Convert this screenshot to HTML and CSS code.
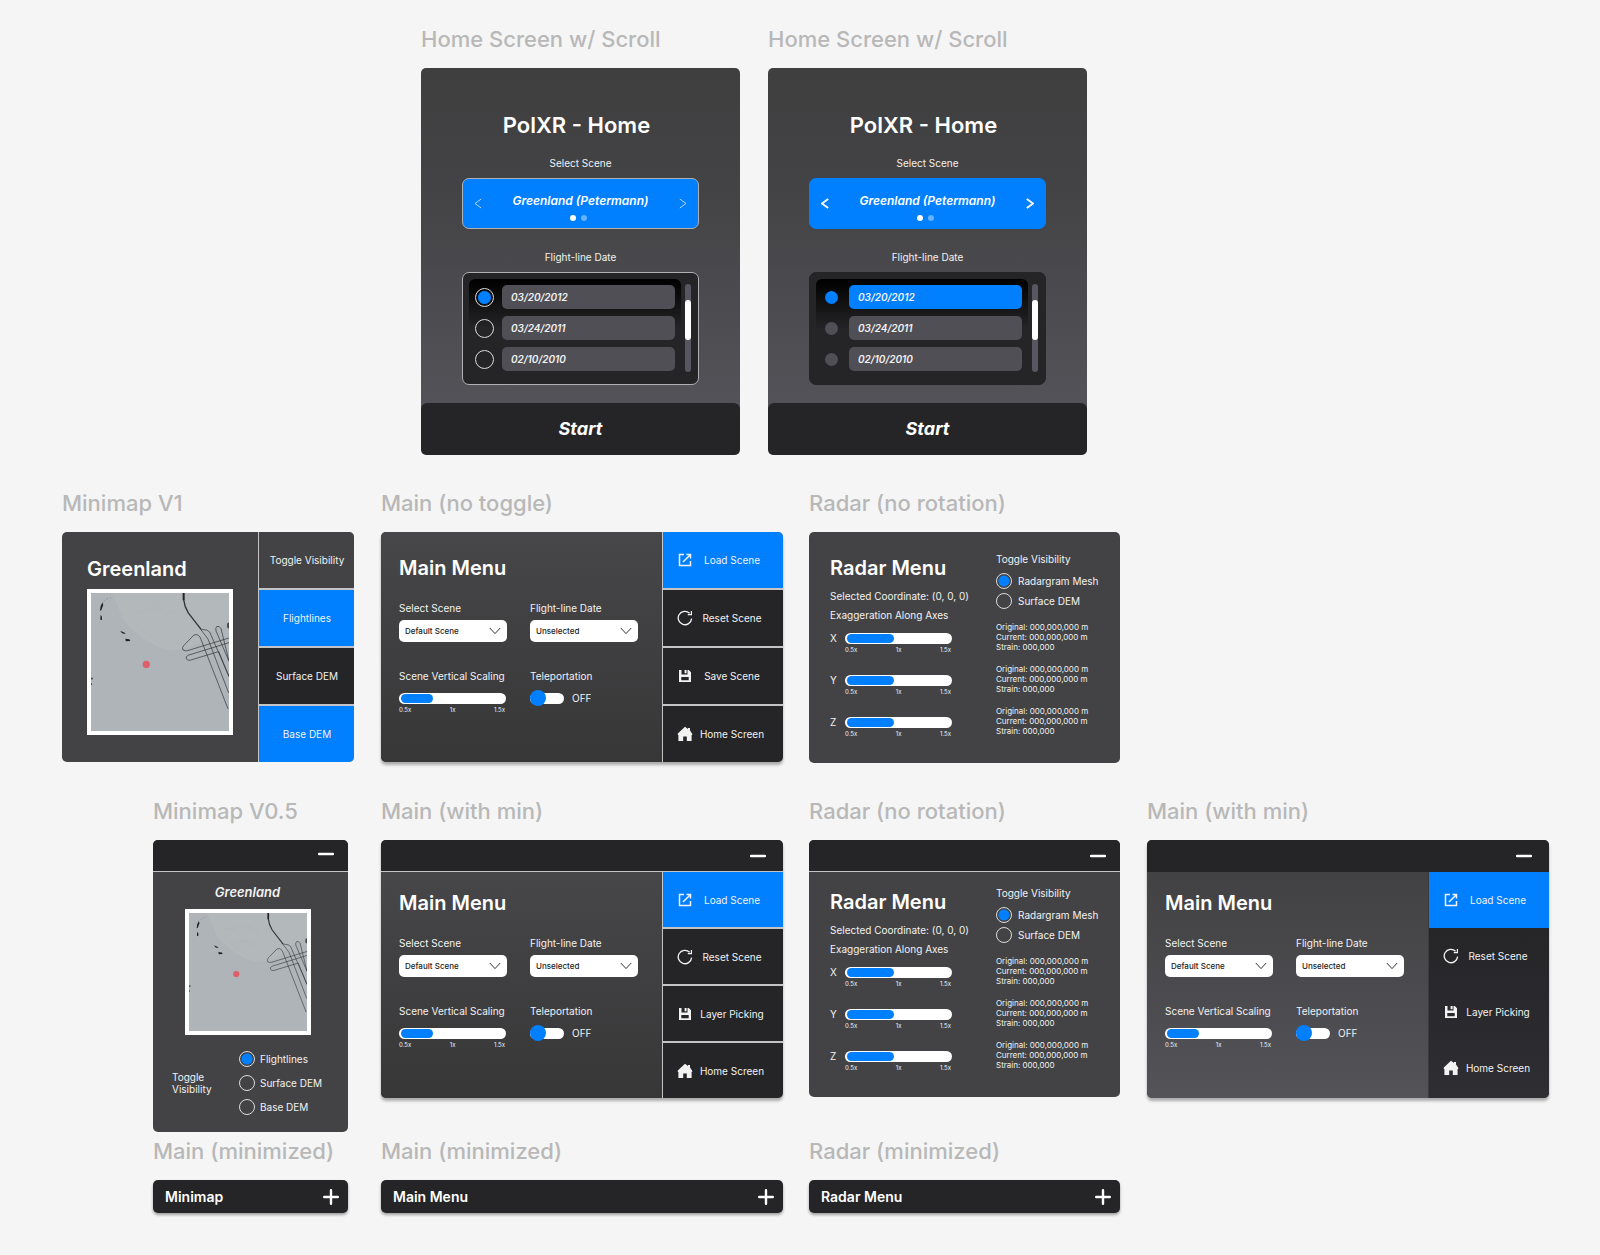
FILE: index.html
```html
<!DOCTYPE html>
<html lang="en">
<head>
<meta charset="utf-8">
<title>PolXR menus</title>
<link rel="stylesheet" href="styles.css">
</head>
<body>
<svg class="defs" aria-hidden="true">
  <symbol id="i-open" viewBox="0 0 16 16"><path d="M7 2.5H2.5v11h11V9" fill="none" stroke="currentColor" stroke-width="1.5"/><path d="M9.5 2.5h4v4M13.3 2.7 6 10" fill="none" stroke="currentColor" stroke-width="1.5"/></symbol>
  <symbol id="i-reset" viewBox="0 0 16 16"><path d="M14.6 8.6A6.7 6.7 0 1 1 12.6 3.2" fill="none" stroke="currentColor" stroke-width="1.3"/><path d="M14.4 1v3.6h-3.6" fill="none" stroke="currentColor" stroke-width="1.2"/></symbol>
  <symbol id="i-save" viewBox="0 0 16 16"><path fill="currentColor" fill-rule="evenodd" d="M2 2h2.5v4.5h6V2h1.2L14 4.3V14H2zM4.3 9v3.2h7.4V9z"/><path fill="currentColor" d="M7.6 2h2v3.2h-2z"/></symbol>
  <symbol id="i-home" viewBox="0 0 16 16"><path fill="currentColor" d="M8 .8 11 3V2h2v2.6l2.2 3.1V9H14.6v6H9.8v-4.6H6.2V15H1.4V9H.8V7.4z"/></symbol>
  <symbol id="i-down" viewBox="0 0 12 8"><path d="m.8 1 5.2 5.6L11.2 1" fill="none" stroke="#333" stroke-width="1"/></symbol>
  <symbol id="i-left" viewBox="0 0 8 11"><path d="M7.2 1 1 5.5 7.2 10" fill="none" stroke="currentColor"/></symbol>
  <symbol id="i-right" viewBox="0 0 8 11"><path d="M.8 1 7 5.5.8 10" fill="none" stroke="currentColor"/></symbol>
  <symbol id="i-min" viewBox="0 0 16 16"><path d="M1 8h14" stroke="currentColor" stroke-width="2.4" stroke-linecap="round"/></symbol>
  <symbol id="i-plus" viewBox="0 0 16 16"><path d="M1.2 8h13.6M8 1.2v13.6" stroke="currentColor" stroke-width="2.4" stroke-linecap="round"/></symbol>
  <symbol id="map" viewBox="20 20 417 417">
    <path fill="#aeb4b8" d="M20 20h417v417H20z"/>
    <path fill="#b3b8bb" d="M85 20h352v90q-60 20-90 60-70 40-130 10-60-30-100-80z"/>
    <g fill="none" stroke="#afb4b7" stroke-width="2"><path d="M130 60q30 30 60 10t70 30M180 130q40-30 90 20M210 40q20 40 60 40M150 100q30 50 80 70"/></g>
    <path fill="#222" d="m49 60 6-12 2 8-6 16-4 2zM49 86l4 6v10l-5-2zM108 134l14 6 2 4-10-2zM124 158l12 2 3 5-14 1zM21 275l5 2-3 5-2-1zM20 293l3 1-1 4h-2zM297 20h6v22h-6z"/>
    <path fill="none" stroke="#555" stroke-dasharray="5 6" d="M58 46q10-12 22-11"/>
    <path fill="none" stroke="#333" stroke-width="4" d="M300 40q2 20 14 40l38 49"/>
    <g fill="none" stroke="#2d2f31" stroke-width="2">
      <path d="M352 129q10 3 18 3 11 4 13 16l54 124M350 128q20 26 24 32l62 162"/>
      <path d="M434 370 349 152q-8-10-18-5l-30 31q-8 8-3 14 6 4 14 2l125-38"/>
      <path d="M437 170 314 208q-9 4-6 11 4 6 12 4l86-26M406 197l31 76M437 226l-24-98q-6-10-13-7-5 5-2 14l39 91"/>
    </g>
    <ellipse cx="435" cy="118" rx="4" ry="9" fill="#44484b"/>
    <circle cx="187" cy="236" r="11" fill="#dd5f6b"/>
  </symbol>
</svg>

<main class="board">
  <section class="row row-home">
    <article class="frame home">
      <h2 class="frame-label">Home Screen w/ Scroll</h2>
      <form class="panel home-panel outlined">
        <h1 class="home-title">PolXR - Home</h1>
        <p class="caption">Select Scene</p>
        <div class="scene-picker">
          <button type="button" class="arrow" aria-label="Previous scene"><svg><use href="#i-left"/></svg></button>
          <div class="scene"><strong>Greenland (Petermann)</strong><span class="dots"><i class="on"></i><i></i></span></div>
          <button type="button" class="arrow" aria-label="Next scene"><svg><use href="#i-right"/></svg></button>
        </div>
        <p class="caption date-caption">Flight-line Date</p>
        <div class="date-box">
          <div class="date-list">
            <label><input type="radio" name="d1" checked><span>03/20/2012</span></label>
            <label><input type="radio" name="d1"><span>03/24/2011</span></label>
            <label><input type="radio" name="d1"><span>02/10/2010</span></label>
          </div>
          <div class="scrollbar"><i></i></div>
        </div>
        <button type="button" class="start">Start</button>
      </form>
    </article>
    <article class="frame home">
      <h2 class="frame-label">Home Screen w/ Scroll</h2>
      <form class="panel home-panel filled">
        <h1 class="home-title">PolXR - Home</h1>
        <p class="caption">Select Scene</p>
        <div class="scene-picker">
          <button type="button" class="arrow" aria-label="Previous scene"><svg><use href="#i-left"/></svg></button>
          <div class="scene"><strong>Greenland (Petermann)</strong><span class="dots"><i class="on"></i><i></i></span></div>
          <button type="button" class="arrow" aria-label="Next scene"><svg><use href="#i-right"/></svg></button>
        </div>
        <p class="caption date-caption">Flight-line Date</p>
        <div class="date-box">
          <div class="date-list">
            <label><input type="radio" name="d2" checked><span>03/20/2012</span></label>
            <label><input type="radio" name="d2"><span>03/24/2011</span></label>
            <label><input type="radio" name="d2"><span>02/10/2010</span></label>
          </div>
          <div class="scrollbar"><i></i></div>
        </div>
        <button type="button" class="start">Start</button>
      </form>
    </article>
  </section>

  <section class="row row-v1">
    <article class="frame map-v1">
      <h2 class="frame-label">Minimap V1</h2>
      <div class="panel split flat">
        <div class="map-side">
          <h3 class="title">Greenland</h3>
          <svg class="map"><use href="#map"/></svg>
        </div>
        <div class="cells">
          <p class="cell plain">Toggle Visibility</p>
          <button class="cell active" aria-pressed="true">Flightlines</button>
          <button class="cell" aria-pressed="false">Surface DEM</button>
          <button class="cell active" aria-pressed="true">Base DEM</button>
        </div>
      </div>
    </article>
    <article class="frame main">
      <h2 class="frame-label">Main (no toggle)</h2>
      <div class="panel split raised">
        <form class="menu">
          <h3 class="title">Main Menu</h3>
          <div class="fields">
            <label class="field">Select Scene<span class="select"><select><option>Default Scene</option></select><svg><use href="#i-down"/></svg></span></label>
            <label class="field">Flight-line Date<span class="select"><select><option>Unselected</option></select><svg><use href="#i-down"/></svg></span></label>
            <label class="field">Scene Vertical Scaling
              <span class="slider"><span class="fill" style="width:31%"></span><input type="range" min="0.5" max="1.5" step="0.1" value="0.8"></span>
              <span class="ticks"><span>0.5x</span><span>1x</span><span>1.5x</span></span></label>
            <label class="field">Teleportation<span class="switch"><input type="checkbox">OFF</span></label>
          </div>
        </form>
        <nav class="cells">
          <button class="cell icon-cell active"><svg><use href="#i-open"/></svg><span>Load Scene</span></button>
          <button class="cell icon-cell"><svg><use href="#i-reset"/></svg><span>Reset Scene</span></button>
          <button class="cell icon-cell"><svg><use href="#i-save"/></svg><span>Save Scene</span></button>
          <button class="cell icon-cell"><svg><use href="#i-home"/></svg><span>Home Screen</span></button>
        </nav>
      </div>
    </article>
    <article class="frame radar">
      <h2 class="frame-label">Radar (no rotation)</h2>
      <form class="panel radar-body flat">
        <div class="radar-head">
          <h3 class="title">Radar Menu</h3>
          <p>Selected Coordinate: (0, 0, 0)</p>
          <p>Exaggeration Along Axes</p>
        </div>
        <fieldset class="radar-toggle">
          <legend>Toggle Visibility</legend>
          <label class="option"><input type="radio" name="r1" checked>Radargram Mesh</label>
          <label class="option"><input type="radio" name="r1">Surface DEM</label>
        </fieldset>
        <label class="axis"><span>X</span><span class="slider"><span class="fill" style="width:46%"></span><input type="range" min="0.5" max="1.5" step="0.01" value="0.96"></span><span class="ticks"><span>0.5x</span><span>1x</span><span>1.5x</span></span></label>
        <p class="info">Original: 000,000,000 m<br>Current: 000,000,000 m<br>Strain: 000,000</p>
        <label class="axis"><span>Y</span><span class="slider"><span class="fill" style="width:46%"></span><input type="range" min="0.5" max="1.5" step="0.01" value="0.96"></span><span class="ticks"><span>0.5x</span><span>1x</span><span>1.5x</span></span></label>
        <p class="info">Original: 000,000,000 m<br>Current: 000,000,000 m<br>Strain: 000,000</p>
        <label class="axis"><span>Z</span><span class="slider"><span class="fill" style="width:46%"></span><input type="range" min="0.5" max="1.5" step="0.01" value="0.96"></span><span class="ticks"><span>0.5x</span><span>1x</span><span>1.5x</span></span></label>
        <p class="info">Original: 000,000,000 m<br>Current: 000,000,000 m<br>Strain: 000,000</p>
      </form>
    </article>
  </section>

  <section class="row row-min">
    <article class="frame map-v05">
      <h2 class="frame-label">Minimap V0.5</h2>
      <div class="panel flat">
        <header class="bar"><button class="win-btn" aria-label="Minimize"><svg><use href="#i-min"/></svg></button></header>
        <form class="map-body">
          <h3 class="map-name">Greenland</h3>
          <svg class="map"><use href="#map"/></svg>
          <div class="map-toggle">
            <p>Toggle Visibility</p>
            <div class="options">
              <label class="option"><input type="radio" name="m1" checked>Flightlines</label>
              <label class="option"><input type="radio" name="m1">Surface DEM</label>
              <label class="option"><input type="radio" name="m1">Base DEM</label>
            </div>
          </div>
        </form>
      </div>
    </article>
    <article class="frame main">
      <h2 class="frame-label">Main (with min)</h2>
      <div class="panel raised">
        <header class="bar"><button class="win-btn" aria-label="Minimize"><svg><use href="#i-min"/></svg></button></header>
        <div class="split with-bar">
          <form class="menu">
            <h3 class="title">Main Menu</h3>
            <div class="fields">
              <label class="field">Select Scene<span class="select"><select><option>Default Scene</option></select><svg><use href="#i-down"/></svg></span></label>
              <label class="field">Flight-line Date<span class="select"><select><option>Unselected</option></select><svg><use href="#i-down"/></svg></span></label>
              <label class="field">Scene Vertical Scaling
                <span class="slider"><span class="fill" style="width:31%"></span><input type="range" min="0.5" max="1.5" step="0.1" value="0.8"></span>
                <span class="ticks"><span>0.5x</span><span>1x</span><span>1.5x</span></span></label>
              <label class="field">Teleportation<span class="switch"><input type="checkbox">OFF</span></label>
            </div>
          </form>
          <nav class="cells">
            <button class="cell icon-cell active"><svg><use href="#i-open"/></svg><span>Load Scene</span></button>
            <button class="cell icon-cell"><svg><use href="#i-reset"/></svg><span>Reset Scene</span></button>
            <button class="cell icon-cell"><svg><use href="#i-save"/></svg><span>Layer Picking</span></button>
            <button class="cell icon-cell"><svg><use href="#i-home"/></svg><span>Home Screen</span></button>
          </nav>
        </div>
      </div>
    </article>
    <article class="frame radar">
      <h2 class="frame-label">Radar (no rotation)</h2>
      <div class="panel flat">
        <header class="bar"><button class="win-btn" aria-label="Minimize"><svg><use href="#i-min"/></svg></button></header>
        <form class="radar-body with-bar">
          <div class="radar-head">
            <h3 class="title">Radar Menu</h3>
            <p>Selected Coordinate: (0, 0, 0)</p>
            <p>Exaggeration Along Axes</p>
          </div>
          <fieldset class="radar-toggle">
            <legend>Toggle Visibility</legend>
            <label class="option"><input type="radio" name="r2" checked>Radargram Mesh</label>
            <label class="option"><input type="radio" name="r2">Surface DEM</label>
          </fieldset>
          <label class="axis"><span>X</span><span class="slider"><span class="fill" style="width:46%"></span><input type="range" min="0.5" max="1.5" step="0.01" value="0.96"></span><span class="ticks"><span>0.5x</span><span>1x</span><span>1.5x</span></span></label>
          <p class="info">Original: 000,000,000 m<br>Current: 000,000,000 m<br>Strain: 000,000</p>
          <label class="axis"><span>Y</span><span class="slider"><span class="fill" style="width:46%"></span><input type="range" min="0.5" max="1.5" step="0.01" value="0.96"></span><span class="ticks"><span>0.5x</span><span>1x</span><span>1.5x</span></span></label>
          <p class="info">Original: 000,000,000 m<br>Current: 000,000,000 m<br>Strain: 000,000</p>
          <label class="axis"><span>Z</span><span class="slider"><span class="fill" style="width:46%"></span><input type="range" min="0.5" max="1.5" step="0.01" value="0.96"></span><span class="ticks"><span>0.5x</span><span>1x</span><span>1.5x</span></span></label>
          <p class="info">Original: 000,000,000 m<br>Current: 000,000,000 m<br>Strain: 000,000</p>
        </form>
      </div>
    </article>
    <article class="frame main seamless">
      <h2 class="frame-label">Main (with min)</h2>
      <div class="panel raised">
        <header class="bar"><button class="win-btn" aria-label="Minimize"><svg><use href="#i-min"/></svg></button></header>
        <div class="split with-bar">
          <form class="menu">
            <h3 class="title">Main Menu</h3>
            <div class="fields">
              <label class="field">Select Scene<span class="select"><select><option>Default Scene</option></select><svg><use href="#i-down"/></svg></span></label>
              <label class="field">Flight-line Date<span class="select"><select><option>Unselected</option></select><svg><use href="#i-down"/></svg></span></label>
              <label class="field">Scene Vertical Scaling
                <span class="slider"><span class="fill" style="width:31%"></span><input type="range" min="0.5" max="1.5" step="0.1" value="0.8"></span>
                <span class="ticks"><span>0.5x</span><span>1x</span><span>1.5x</span></span></label>
              <label class="field">Teleportation<span class="switch"><input type="checkbox">OFF</span></label>
            </div>
          </form>
          <nav class="cells">
            <button class="cell icon-cell active"><svg><use href="#i-open"/></svg><span>Load Scene</span></button>
            <button class="cell icon-cell"><svg><use href="#i-reset"/></svg><span>Reset Scene</span></button>
            <button class="cell icon-cell"><svg><use href="#i-save"/></svg><span>Layer Picking</span></button>
            <button class="cell icon-cell"><svg><use href="#i-home"/></svg><span>Home Screen</span></button>
          </nav>
        </div>
      </div>
    </article>
  </section>

  <section class="row row-closed">
    <article class="frame map-v05">
      <h2 class="frame-label">Main (minimized)</h2>
      <div class="closed"><span>Minimap</span><button class="win-btn" aria-label="Expand"><svg><use href="#i-plus"/></svg></button></div>
    </article>
    <article class="frame main">
      <h2 class="frame-label">Main (minimized)</h2>
      <div class="closed"><span>Main Menu</span><button class="win-btn" aria-label="Expand"><svg><use href="#i-plus"/></svg></button></div>
    </article>
    <article class="frame radar">
      <h2 class="frame-label">Radar (minimized)</h2>
      <div class="closed"><span>Radar Menu</span><button class="win-btn" aria-label="Expand"><svg><use href="#i-plus"/></svg></button></div>
    </article>
  </section>
</main>
</body>
</html>
```
FILE: styles.css
```css
:root {
  --blue: #007fff;
  --dark: #252527;
  --panel: #434345;
  --pill: #504f56;
  --line: #c4c4c6;
}

* { box-sizing: border-box; }

body {
  margin: 0;
  background: #f5f5f5;
  color: #f2f2f2;
  font: 10px/14px Inter, "Liberation Sans", sans-serif;
}

h1, h2, h3, p, fieldset { margin: 0; padding: 0; border: 0; }
legend { padding: 0; }
button, select, input { font: inherit; color: inherit; margin: 0; }
button { border: 0; padding: 0; background: none; cursor: pointer; }
svg { display: block; }
.defs { position: absolute; width: 0; height: 0; }

/* Board: every row shares the same column tracks */
.board { padding: 25px 0 43px 62px; }
.row {
  display: grid;
  grid-template-columns: minmax(319px, 319fr) minmax(428px, 428fr) minmax(338px, 338fr) minmax(453px, 453fr);
  align-items: start;
}
.row-home {
  grid-template-columns: minmax(359px, 359fr) minmax(347px, 347fr) minmax(832px, 832fr);
}
.row-home .frame:first-child { grid-column: 2; }
.row-v1 { margin-top: 34px; }
.row-min { margin-top: 34px; }
.row-closed { margin-top: 5px; }

.frame-label {
  margin-bottom: 15px;
  color: #b8b8b8;
  font-size: 22px;
  font-weight: 500;
  line-height: 28px;
  white-space: nowrap;
}
.home { width: 319px; }
.map-v1 { width: 292px; }
.map-v05 { width: 195px; margin-left: 91px; }
.main { width: 402px; }
.radar { width: 311px; }

.panel { border-radius: 5px; overflow: hidden; }
.flat { background: var(--panel); }
.raised { background: #464648; box-shadow: 0 3px 3px rgba(0, 0, 0, .3); }
.title { color: #fff; font-size: 20px; font-weight: 600; line-height: 24px; }

/* Radios */
input[type="radio"] {
  appearance: none;
  flex: none;
  width: 16px;
  height: 16px;
  border: 1px solid #dcdcdc;
  border-radius: 50%;
}
input[type="radio"]:checked { background: radial-gradient(circle, var(--blue) 5px, transparent 6px); }
.option { display: flex; align-items: center; }

/* Home screen */
.home-panel {
  display: flex;
  flex-direction: column;
  background: linear-gradient(#3f3f40, #434345 30%, #535258 85%);
}
.home-title {
  padding: 43px 8px 0 0;
  color: #fff;
  font-size: 22px;
  font-weight: 600;
  line-height: 28px;
  text-align: center;
}
.caption { margin-top: 17px; text-align: center; }
.scene-picker {
  display: flex;
  align-items: center;
  justify-content: space-between;
  height: 51px;
  margin: 8px 41px 0;
  padding: 0 11px;
  border: 1px solid var(--blue);
  border-radius: 7px;
  background: var(--blue);
}
.arrow svg { width: 8px; height: 11px; }
.filled .arrow svg { stroke-width: 2; }
.outlined .arrow { opacity: .75; }
.scene {
  display: flex;
  flex-direction: column;
  align-items: center;
  gap: 7px;
  padding-top: 7px;
  font-size: 12px;
  font-style: italic;
}
.scene strong { font-weight: 600; color: #fff; }
.dots { display: flex; gap: 5px; padding-right: 3px; }
.dots i { width: 6px; height: 6px; border-radius: 50%; background: #66b2ff; }
.dots .on { background: #fff; }
.date-caption { margin-top: 21px; }
.date-box {
  display: flex;
  gap: 4px;
  height: 113px;
  margin: 8px 41px 0;
  padding: 6px 7px 7px 6px;
  border: 1px solid var(--dark);
  border-radius: 7px;
  background: var(--dark);
}
.outlined .scene-picker, .outlined .date-box { border-color: #b0b0b3; }
.date-list {
  flex: 1;
  display: flex;
  flex-direction: column;
  gap: 7px;
  padding: 6px 6px 0;
  border-radius: 6px;
  background: linear-gradient(#000, var(--dark) 50px);
}
.date-list label { display: flex; align-items: center; gap: 8px; }
.date-list input[type="radio"] { width: 19px; height: 19px; }
.date-list input[type="radio"]:checked { background: radial-gradient(circle, var(--blue) 6px, transparent 7px); }
.date-list span {
  flex: 1;
  padding-left: 9px;
  border-radius: 5px;
  background: var(--pill);
  font-size: 10px;
  font-style: italic;
  font-weight: 600;
  line-height: 24px;
}
.filled .date-list input[type="radio"] { border: 3px solid transparent; background: var(--pill) padding-box; }
.filled .date-list input[type="radio"]:checked { background: var(--blue) padding-box; }
.filled .date-list :checked + span { background: var(--blue); }
.scrollbar { width: 6px; height: 88px; margin-top: 5px; padding-top: 16px; border-radius: 3px; background: #575661; }
.scrollbar i { display: block; height: 40px; border-radius: 3px; background: #fff; }
.start {
  margin-top: 18px;
  border-radius: 6px;
  background: var(--dark);
  color: #fff;
  font-size: 18px;
  font-style: italic;
  font-weight: 700;
  line-height: 52px;
}

/* Panels with a column of cells on the right */
.split { display: grid; grid-template-columns: 1fr auto; }
.cells {
  display: grid;
  grid-template-rows: repeat(4, 56px);
  gap: 2px;
  width: 121px;
  border-left: 1px solid var(--line);
  background: var(--line);
}
.cell {
  display: flex;
  align-items: center;
  justify-content: center;
  background: var(--dark);
  text-align: center;
}
.cell.active { background: var(--blue); }
.cell.plain { background: var(--panel); }
.icon-cell { padding: 0 12px 0 14px; }
.icon-cell svg { width: 16px; height: 16px; }
.icon-cell span { flex: 1; }
.map-v1 .cells { width: 97px; }

.map { border: 4px solid #fff; }
.map-side { padding: 25px; }
.map-side .map { width: 146px; height: 146px; margin-top: 8px; }

/* Title bars */
.bar, .closed { display: flex; align-items: center; justify-content: flex-end; background: var(--dark); }
.bar { height: 32px; padding-right: 14px; border-bottom: 1px solid var(--line); }
.main .bar { padding-right: 17px; }
.map-v05 .bar { padding-bottom: 4px; }
.win-btn { color: #fff; }
.win-btn svg { width: 16px; height: 16px; }
.closed {
  justify-content: space-between;
  height: 33px;
  padding: 0 9px 0 12px;
  border-radius: 5px;
  box-shadow: 0 2px 3px rgba(0, 0, 0, .35);
  color: #fff;
  font-size: 14px;
  font-weight: 600;
}

/* Main menu */
.menu { padding: 24px 0 0 18px; background: linear-gradient(#474749, #373738); }
.with-bar .menu { padding-top: 19px; }
.with-bar .cells { grid-template-rows: repeat(4, 55px); }
.fields { display: grid; grid-template-columns: 108px 108px; gap: 27px 23px; margin-top: 21px; }
.field { white-space: nowrap; }
.select { display: grid; align-items: center; margin-top: 5px; }
.select > * { grid-area: 1 / 1; }
.select select {
  appearance: none;
  width: 100%;
  height: 22px;
  padding: 0 6px;
  border: 0;
  border-radius: 5px;
  background: #fff;
  color: #222;
  font-size: 8px;
  font-weight: 500;
}
.select svg { justify-self: end; width: 12px; height: 8px; margin-right: 6px; pointer-events: none; }
.slider {
  position: relative;
  display: block;
  width: 107px;
  height: 11px;
  margin-top: 10px;
  padding: 1px 2px;
  border-radius: 6px;
  background: #fff;
}
.fill { display: block; height: 9px; border-radius: 5px; background: var(--blue); }
.slider input { position: absolute; inset: 0; width: 100%; height: 100%; opacity: 0; }
.ticks { display: flex; justify-content: space-between; width: 106px; margin-top: 1px; font-size: 6px; line-height: 10px; }
.switch { display: flex; align-items: center; gap: 8px; margin-top: 8px; }
.switch input {
  appearance: none;
  display: flex;
  align-items: center;
  width: 34px;
  height: 11px;
  border-radius: 6px;
  background: #fff;
}
.switch input::before { content: ""; flex: none; width: 16px; height: 16px; border-radius: 50%; background: var(--blue); }

.seamless .bar { border-bottom-color: var(--dark); }
.seamless .menu { background: linear-gradient(#424244, #535358); }
.seamless .cells {
  gap: 0;
  grid-template-rows: repeat(4, 56px);
  padding-bottom: 2px;
  border-color: #3b3b3e;
  background: linear-gradient(#232325, #2e2e33);
}
.seamless .cell:not(.active) { background: none; }

/* Radar menu */
.radar-body {
  display: grid;
  grid-template-columns: 166px 1fr;
  padding: 20px 0 15px 21px;
}
.radar-body.with-bar { padding-top: 14px; }
.radar-head { padding-top: 4px; }
.radar-head p { margin-top: 5px; white-space: nowrap; }
.radar-head .title { margin-bottom: 9px; }
.radar-toggle legend { margin-bottom: 7px; }
.radar-toggle .option { gap: 6px; margin-bottom: 4px; }
.axis {
  display: grid;
  grid-template-columns: 15px 107px;
  align-content: start;
  align-items: center;
  height: 42px;
  padding-top: 9px;
}
.axis .slider { margin-top: 0; }
.axis .ticks { grid-column: 2; margin-top: 0; }
.info { font-size: 8px; line-height: 10px; }

/* Compact minimap */
.map-body { display: flex; flex-direction: column; align-items: center; padding: 11px 25px 17px 19px; }
.map-name { font-size: 13px; font-style: italic; font-weight: 600; line-height: 18px; }
.map-body .map { width: 126px; height: 126px; margin-top: 8px; }
.map-toggle { display: flex; align-items: center; gap: 23px; align-self: stretch; margin-top: 16px; }
.map-toggle p { flex: none; width: 44px; line-height: 12px; }
.options { display: grid; gap: 8px; white-space: nowrap; }
.options .option { gap: 5px; }
```
